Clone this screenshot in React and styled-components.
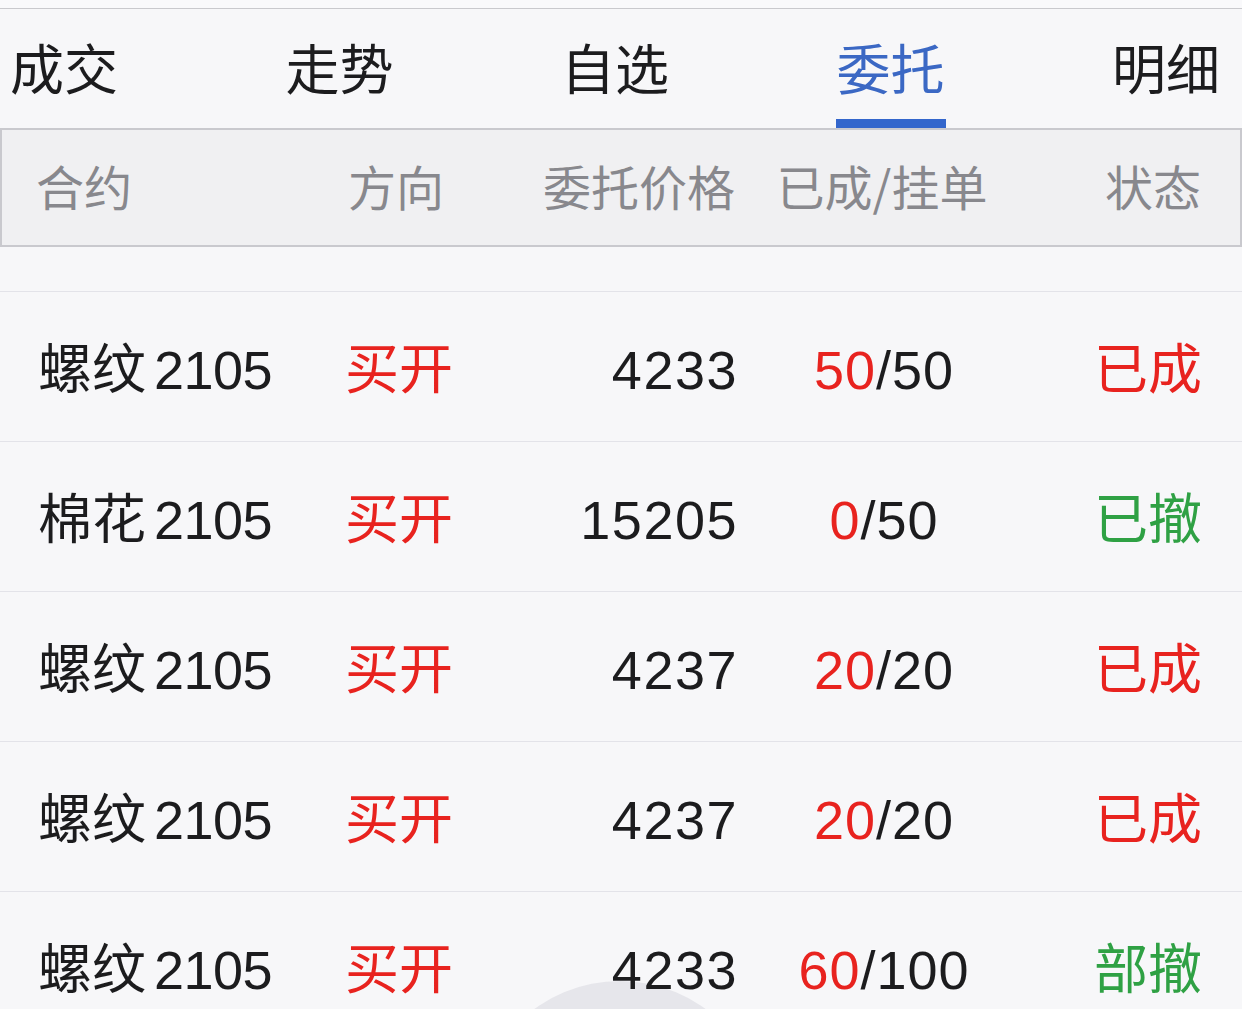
import React from "react";
import styled, { createGlobalStyle } from "styled-components";

const Global = createGlobalStyle`
  html { background: #f7f7f9; }
  body {
    margin: 0;
    padding: 0;
    font-family: "Liberation Sans", "Noto Sans CJK SC", sans-serif;
    -webkit-font-smoothing: antialiased;
  }
`;

const Page = styled.div`
  width: 1242px;
  height: 1009px;
  overflow: hidden;
  position: relative;
  z-index: 0;
  background: #f7f7f9;
`;

const TopStrip = styled.div`
  height: 8px;
  background: #f9f9fb;
  border-bottom: 1px solid #c9c9cd;
`;

const TabBar = styled.nav`
  height: 119px;
  display: flex;
  justify-content: space-between;
  align-items: stretch;
  padding: 0 22px 0 10px;
`;

const Tab = styled.div`
  position: relative;
  display: flex;
  align-items: center;
  padding-bottom: 4px;
  font-size: 54px;
  font-family: "Noto Sans CJK SC", sans-serif;
  color: ${(p) => (p.$active ? "#3b68c4" : "#1c1c1e")};
  &::after {
    content: "";
    display: ${(p) => (p.$active ? "block" : "none")};
    position: absolute;
    left: 50%;
    bottom: 0;
    width: 110px;
    height: 9px;
    margin-left: -55px;
    background: #3366cc;
  }
`;

const HeaderRow = styled.div`
  box-sizing: border-box;
  height: 119px;
  display: grid;
  grid-template-columns: 312px 192px 195px 294px 172px;
  align-items: center;
  padding: 0 0 6px 34px;
  background: #f0f0f2;
  border: 2px solid #c9c9ce;
`;

const HeadCell = styled.div`
  font-size: 48px;
  font-family: "Noto Sans CJK SC", sans-serif;
  color: #88888d;
  text-align: ${(p) => p.$align || "left"};
  white-space: nowrap;
`;

const Spacer = styled.div`
  height: 44px;
  border-bottom: 1px solid #e3e3e9;
`;

const Row = styled.div`
  box-sizing: border-box;
  height: 150px;
  display: grid;
  grid-template-columns: 307px 203px 190px 292px 172px;
  align-items: center;
  padding: 6px 40px 0 38px;
  border-bottom: 1px solid #e3e3e9;
`;

const Cell = styled.div`
  font-size: 54px;
  line-height: 1;
  color: ${(p) => p.$color || "#1c1c1e"};
  text-align: ${(p) => p.$align || "left"};
  white-space: nowrap;
`;

const Num = styled.span`
  letter-spacing: ${(p) => p.$spacing || "1px"};
  color: ${(p) => p.$color || "inherit"};
`;

const Gap = styled.span`
  display: inline-block;
  width: 8px;
`;

const Bubble = styled.div`
  position: absolute;
  z-index: -1;
  left: 475px;
  top: 981px;
  width: 290px;
  height: 290px;
  border-radius: 50%;
  background: #e6e6eb;
`;

const RED = "#e8231f";
const GREEN = "#2fa144";

const tabs = ["成交", "走势", "自选", "委托", "明细"];

const orders = [
  { name: "螺纹", code: "2105", dir: "买开", price: "4233", done: "50", total: "50", status: "已成", sc: RED },
  { name: "棉花", code: "2105", dir: "买开", price: "15205", done: "0", total: "50", status: "已撤", sc: GREEN },
  { name: "螺纹", code: "2105", dir: "买开", price: "4237", done: "20", total: "20", status: "已成", sc: RED },
  { name: "螺纹", code: "2105", dir: "买开", price: "4237", done: "20", total: "20", status: "已成", sc: RED },
  { name: "螺纹", code: "2105", dir: "买开", price: "4233", done: "60", total: "100", status: "部撤", sc: GREEN },
];

export default function App() {
  return (
    <>
      <Global />
      <Page>
        <TopStrip />
        <TabBar>
          {tabs.map((t) => (
            <Tab key={t} $active={t === "委托"}>
              {t}
            </Tab>
          ))}
        </TabBar>
        <HeaderRow>
          <HeadCell>合约</HeadCell>
          <HeadCell>方向</HeadCell>
          <HeadCell $align="right">委托价格</HeadCell>
          <HeadCell $align="center">已成/挂单</HeadCell>
          <HeadCell $align="right">状态</HeadCell>
        </HeaderRow>
        <Spacer />
        {orders.map((o, i) => (
          <Row key={i}>
            <Cell>
              {o.name}
              <Gap />
              <Num $spacing="-0.5px">{o.code}</Num>
            </Cell>
            <Cell $color={RED}>{o.dir}</Cell>
            <Cell $align="right">
              <Num $spacing="1.5px">{o.price}</Num>
            </Cell>
            <Cell $align="center">
              <Num $color={RED}>{o.done}</Num>
              <Num>/{o.total}</Num>
            </Cell>
            <Cell $align="right" $color={o.sc}>
              {o.status}
            </Cell>
          </Row>
        ))}
        <Bubble />
      </Page>
    </>
  );
}
